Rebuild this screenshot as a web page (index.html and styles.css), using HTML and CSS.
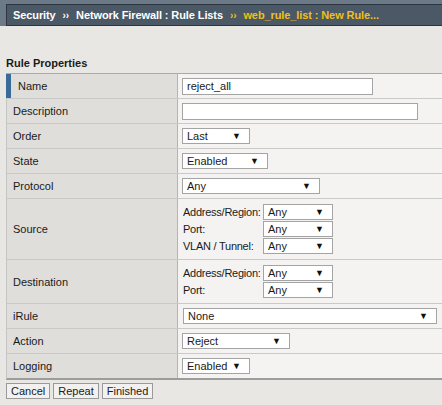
FILE: index.html
```html
<!DOCTYPE html>
<html>
<head>
<meta charset="utf-8">
<link rel="stylesheet" href="styles.css">
</head>
<body>
<div class="topbar">
  <div class="crumbs">
    <span class="crumb">Security</span><span class="sep">››</span><span class="crumb">Network Firewall : Rule Lists</span><span class="sep cur">››</span><span class="cur">web_rule_list : New Rule...</span>
  </div>
</div>

<div class="section-title">Rule Properties</div>

<div class="props">
  <div class="row">
    <div class="lbl first">Name</div>
    <div class="val"><div class="inp w-name">reject_all</div></div>
  </div>
  <div class="row">
    <div class="lbl">Description</div>
    <div class="val"><div class="inp w-desc"></div></div>
  </div>
  <div class="row">
    <div class="lbl">Order</div>
    <div class="val"><div class="sel w-order"><span>Last</span><i>▼</i></div></div>
  </div>
  <div class="row">
    <div class="lbl">State</div>
    <div class="val"><div class="sel w-state"><span>Enabled</span><i>▼</i></div></div>
  </div>
  <div class="row">
    <div class="lbl">Protocol</div>
    <div class="val"><div class="sel w-proto"><span>Any</span><i>▼</i></div></div>
  </div>
  <div class="row tall-src">
    <div class="lbl">Source</div>
    <div class="val sub">
      <div class="subrow"><span class="sublbl">Address/Region:</span><div class="sel w-small"><span>Any</span><i>▼</i></div></div>
      <div class="subrow"><span class="sublbl">Port:</span><div class="sel w-small"><span>Any</span><i>▼</i></div></div>
      <div class="subrow"><span class="sublbl">VLAN / Tunnel:</span><div class="sel w-small"><span>Any</span><i>▼</i></div></div>
    </div>
  </div>
  <div class="row tall-dst">
    <div class="lbl">Destination</div>
    <div class="val sub">
      <div class="subrow"><span class="sublbl">Address/Region:</span><div class="sel w-small"><span>Any</span><i>▼</i></div></div>
      <div class="subrow"><span class="sublbl">Port:</span><div class="sel w-small"><span>Any</span><i>▼</i></div></div>
    </div>
  </div>
  <div class="row">
    <div class="lbl">iRule</div>
    <div class="val"><div class="sel w-irule"><span>None</span><i>▼</i></div></div>
  </div>
  <div class="row">
    <div class="lbl">Action</div>
    <div class="val"><div class="sel w-action"><span>Reject</span><i>▼</i></div></div>
  </div>
  <div class="row last">
    <div class="lbl">Logging</div>
    <div class="val"><div class="sel w-order"><span>Enabled</span><i>▼</i></div></div>
  </div>
</div>

<div class="buttons">
  <button class="btn">Cancel</button>
  <button class="btn">Repeat</button>
  <button class="btn">Finished</button>
</div>
</body>
</html>
```

FILE: styles.css
```css
* { box-sizing: border-box; }
html, body { margin: 0; padding: 0; }
body {
  background: #e9e7e3;
  font-family: "Liberation Sans", Arial, sans-serif;
  font-size: 11px;
  color: #1a1a1a;
  width: 442px;
  overflow: hidden;
}
.topbar {
  background: #6c7a88;
  padding: 4px 0 0 6px;
  height: 26px;
}
.crumbs {
  background: #4b5866;
  border: 1px solid #2c3640;
  border-right: none;
  height: 22px;
  display: flex;
  align-items: center;
  padding-left: 6px;
  font-weight: bold;
  color: #ffffff;
  white-space: nowrap;
  letter-spacing: -0.1px;
}
.sep { margin: 0 7px; font-size: 10px; }
.cur { color: #f0c018; }
.section-title {
  margin: 30px 0 0 6px;
  font-weight: bold;
  height: 17px;
  line-height: 14px;
}
.props {
  margin-left: 6px;
  border-top: 1px solid #a9a9a9;
  border-left: 1px solid #c4c4c4;
  border-bottom: 2px solid #9c9c9c;
}
.row {
  display: grid;
  grid-template-columns: 171px 1fr;
  height: 25px;
  border-bottom: 1px solid #c9c9c9;
}
.row.last { border-bottom: none; height: 24px; }
.row.tall-src { height: 61px; }
.row.tall-dst { height: 44px; }
.lbl {
  background: #dfdedb;
  border-right: 1px solid #b4b4b4;
  display: flex;
  align-items: center;
  padding-left: 6px;
}
.lbl.first {
  border-left: 5px solid #3a6a9a;
  padding-left: 7px;
  margin-left: -1px;
}
.val {
  background: #f4f3f1;
  display: flex;
  align-items: center;
  padding-left: 4px;
}
.val.sub {
  flex-direction: column;
  align-items: flex-start;
  justify-content: center;
  gap: 1px;
}
.subrow {
  display: flex;
  align-items: center;
  height: 16px;
}
.sublbl {
  width: 81px;
  padding-left: 1px;
  white-space: nowrap;
  letter-spacing: -0.25px;
}
.inp {
  height: 17px;
  background: #ffffff;
  border: 1px solid #a4a4a4;
  padding-left: 4px;
  line-height: 15px;
}
.w-name { width: 191px; }
.w-desc { width: 236px; }
.sel {
  height: 16px;
  background: #ffffff;
  border: 1px solid #a4a4a4;
  display: flex;
  align-items: center;
  justify-content: space-between;
  padding: 0 8px 0 4px;
}
.sel i {
  font-style: normal;
  font-size: 9px;
  color: #111;
}
.w-order { width: 68px; }
.w-state { width: 86px; }
.w-proto { width: 138px; }
.w-small { width: 70px; }
.w-irule { width: 254px; margin-left: 1px; }
.w-action { width: 108px; }
.buttons {
  display: flex;
  gap: 3px;
  margin: 3px 0 0 6px;
}
.btn {
  font-family: "Liberation Sans", Arial, sans-serif;
  font-size: 11px;
  height: 16px;
  padding: 0 4px;
  background: #f2f1ef;
  border: 1px solid #9a9a9a;
  color: #1a1a1a;
  line-height: 12px;
}
```
